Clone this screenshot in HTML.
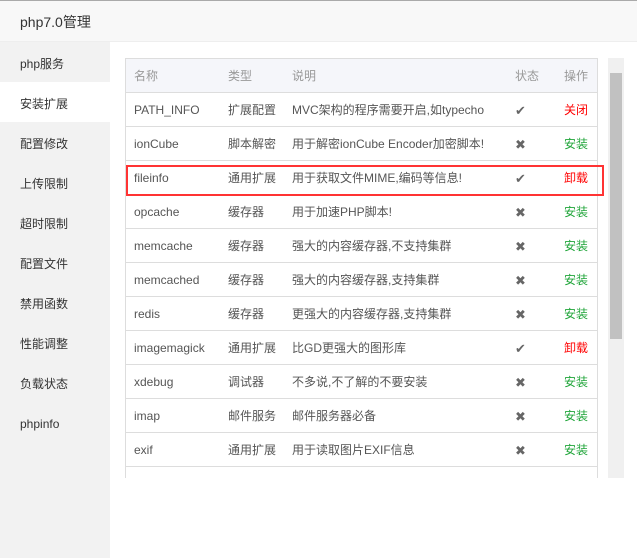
<!DOCTYPE html><html><head><meta charset="utf-8"><style>
*{margin:0;padding:0;box-sizing:border-box}
body{width:637px;height:558px;background:#fff;font-family:"Liberation Sans","Noto Sans CJK SC",sans-serif;font-size:12px;color:#555;position:relative;overflow:hidden}
.hd{position:absolute;left:0;top:0;width:637px;height:42px;background:#f8f8f8;border-bottom:1px solid #eee;border-top:1px solid #aaa;font-size:14px;color:#333;line-height:42px;padding-left:20px}
.sb{position:absolute;left:0;top:42px;width:110px;height:516px;background:#f2f2f2}
.sb div{height:40px;line-height:44px;padding-left:20px;color:#333;font-size:12px}
.sb .on{background:#fff}
.tb{position:absolute;left:125px;top:58px;width:473px;height:420px;border:1px solid #ddd;border-bottom:none;overflow:hidden}
.r{height:34px;border-bottom:1px solid #ddd;position:relative;line-height:35px}
.r span{position:absolute;top:0;white-space:nowrap}
.h{background:#f5f6fa;color:#999}
.a{left:8px}.b{left:102px}.c{left:166px}.d{left:389px}.e{left:438px}
.g{color:#20a53a}.x{color:#f00}
.st{font-size:13px;color:#666;left:389px}
.sc{position:absolute;left:608px;top:58px;width:16px;height:420px;background:#f0f0f0}
.th{position:absolute;left:2px;top:15px;width:12px;height:266px;background:#c1c1c1}
.red{position:absolute;left:126px;top:165px;width:478px;height:31px;border:2px solid #f33}
</style></head><body>
<div class="hd">php7.0管理</div>
<div class="sb"><div>php服务</div><div class="on">安装扩展</div><div>配置修改</div><div>上传限制</div><div>超时限制</div><div>配置文件</div><div>禁用函数</div><div>性能调整</div><div>负载状态</div><div>phpinfo</div></div>
<div class="tb">
<div class="r h"><span class="a">名称</span><span class="b">类型</span><span class="c">说明</span><span class="d">状态</span><span class="e">操作</span></div>
<div class="r"><span class="a">PATH_INFO</span><span class="b">扩展配置</span><span class="c">MVC架构的程序需要开启,如typecho</span><span class="st">✔</span><span class="e x">关闭</span></div>
<div class="r"><span class="a">ionCube</span><span class="b">脚本解密</span><span class="c">用于解密ionCube Encoder加密脚本!</span><span class="st">✖</span><span class="e g">安装</span></div>
<div class="r"><span class="a">fileinfo</span><span class="b">通用扩展</span><span class="c">用于获取文件MIME,编码等信息!</span><span class="st">✔</span><span class="e x">卸载</span></div>
<div class="r"><span class="a">opcache</span><span class="b">缓存器</span><span class="c">用于加速PHP脚本!</span><span class="st">✖</span><span class="e g">安装</span></div>
<div class="r"><span class="a">memcache</span><span class="b">缓存器</span><span class="c">强大的内容缓存器,不支持集群</span><span class="st">✖</span><span class="e g">安装</span></div>
<div class="r"><span class="a">memcached</span><span class="b">缓存器</span><span class="c">强大的内容缓存器,支持集群</span><span class="st">✖</span><span class="e g">安装</span></div>
<div class="r"><span class="a">redis</span><span class="b">缓存器</span><span class="c">更强大的内容缓存器,支持集群</span><span class="st">✖</span><span class="e g">安装</span></div>
<div class="r"><span class="a">imagemagick</span><span class="b">通用扩展</span><span class="c">比GD更强大的图形库</span><span class="st">✔</span><span class="e x">卸载</span></div>
<div class="r"><span class="a">xdebug</span><span class="b">调试器</span><span class="c">不多说,不了解的不要安装</span><span class="st">✖</span><span class="e g">安装</span></div>
<div class="r"><span class="a">imap</span><span class="b">邮件服务</span><span class="c">邮件服务器必备</span><span class="st">✖</span><span class="e g">安装</span></div>
<div class="r"><span class="a">exif</span><span class="b">通用扩展</span><span class="c">用于读取图片EXIF信息</span><span class="st">✖</span><span class="e g">安装</span></div>
<div class="r"></div>
</div>
<div class="red"></div>
<div class="sc"><div class="th"></div></div>
</body></html>
